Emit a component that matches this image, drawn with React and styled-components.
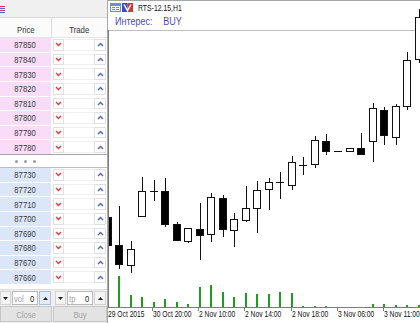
import React from "react";
import styled, { createGlobalStyle } from "styled-components";

const FONT = `"Liberation Sans", Arial, sans-serif`;
const SQ = 0.82;

const GlobalStyle = createGlobalStyle`
  html, body { margin: 0; padding: 0; background: #fff; }
  body { font-family: ${FONT}; overflow: hidden; }
`;

const Squeeze = styled.span`
  display: inline-block;
  white-space: pre;
  transform: scaleX(${SQ});
  transform-origin: ${(p) => p.$origin || "center"};
`;

const Root = styled.div`
  display: flex;
  width: 420px;
  height: 323px;
  overflow: hidden;
  background: #fff;
`;

const Panel = styled.div`
  width: 108px;
  flex: none;
  display: flex;
  flex-direction: column;
  box-sizing: border-box;
  border-right: 1px solid #a9a9a9;
  background: #fff;
`;

const Toolbar = styled.div`
  height: 18px;
  flex: none;
  box-sizing: border-box;
  background: #f0f0f0;
  border-bottom: 1px solid #d9d9d9;
  display: flex;
  align-items: center;
`;

const HeaderRow = styled.div`
  height: 20px;
  flex: none;
  box-sizing: border-box;
  display: grid;
  grid-template-columns: 51px 1fr;
  background: #fbfbfb;
  border-bottom: 1px solid #e4e4e4;
`;

const HeaderCell = styled.div`
  display: flex;
  align-items: center;
  justify-content: center;
  padding-top: 3px;
  font-size: 9.5px;
  color: #333;
  & + & { border-left: 1px solid #dcdcdc; }
`;

const Ladder = styled.div`
  height: 116px;
  flex: none;
  display: grid;
  grid-template-rows: repeat(8, 1fr);
  row-gap: 1px;
  background: #fff;
`;

const Row = styled.div`
  display: grid;
  grid-template-columns: 51px 1fr;
  column-gap: 1px;
  min-height: 0;
`;

const PriceCell = styled.div`
  background: ${(p) => (p.$side === "sell" ? "#f9dcf7" : "#dbe6f9")};
  display: flex;
  align-items: center;
  justify-content: center;
  font-size: 9.4px;
  color: #383838;
`;

const TradeCell = styled.div`
  display: flex;
  padding: 1px;
  background: #fff;
  min-height: 0;
`;

const StepBtn = styled.div`
  width: ${(p) => p.$w}px;
  flex: none;
  box-sizing: border-box;
  border: 1px solid #e0e0e0;
  background: #fff;
  display: flex;
  align-items: center;
  justify-content: center;
`;

const QtyBox = styled.div`
  flex: 1;
  box-sizing: border-box;
  border-top: 1px solid #f0f0f0;
  border-bottom: 1px solid #f0f0f0;
  background: #fff;
`;

const Divider = styled.div`
  height: 14px;
  flex: none;
  box-sizing: border-box;
  border-top: 1px solid #a4a4a4;
  border-bottom: 1px solid #bdbdbd;
  display: grid;
  grid-template-columns: 51px 1fr;
  background: #fff;
`;

const Dots = styled.div`
  display: flex;
  align-items: center;
  justify-content: center;
  gap: 6px;
`;

const Dot = styled.span`
  width: 3px;
  height: 3px;
  border-radius: 50%;
  background: #9c9c9c;
`;

const Spacer = styled.div`
  flex: 1;
  background: #fff;
`;

const Controls = styled.div`
  height: 17px;
  flex: none;
  box-sizing: border-box;
  background: #f0f0f0;
  border-top: 1px solid #dedede;
  display: flex;
  align-items: center;
  padding: 0 1px 0 0;
`;

const Spin = styled.div`
  display: flex;
  align-items: stretch;
  height: 14px;
  margin-left: ${(p) => p.$ml || 0}px;
`;

const SpinBtn = styled.div`
  width: ${(p) => p.$w}px;
  box-sizing: border-box;
  border: 1px solid ${(p) => (p.$active ? "#a9bfdc" : "#d2d2d2")};
  background: ${(p) => (p.$active ? "#e3ecf8" : "#f4f4f4")};
  display: flex;
  align-items: center;
  justify-content: center;
`;

const SpinField = styled.div`
  width: ${(p) => p.$w}px;
  box-sizing: border-box;
  border: 1px solid #b9b9b9;
  background: #fff;
  margin: 0 1px;
  display: flex;
  align-items: center;
  justify-content: space-between;
  padding: 0 3px 0 1px;
  font-size: 9.4px;
  overflow: hidden;
`;

const FieldLabel = styled(Squeeze)`
  color: #a0a0a0;
`;

const FieldValue = styled(Squeeze)`
  color: #222;
`;

const Actions = styled.div`
  height: 17px;
  flex: none;
  display: grid;
  grid-template-columns: 52px 1fr;
  column-gap: 1px;
  padding-bottom: 1px;
  box-sizing: border-box;
  background: #f0f0f0;
`;

const ActionBtn = styled.div`
  box-sizing: border-box;
  border: 1px solid #c7c7c7;
  background: #e3e3e3;
  color: #a3a3a3;
  font-size: 9.4px;
  display: flex;
  align-items: center;
  justify-content: center;
`;

const Chart = styled.div`
  flex: 1;
  position: relative;
  background: #fff;
  overflow: hidden;
`;

const Canvas = styled.svg`
  display: block;
`;

const Legend = styled.div`
  position: absolute;
  left: 2px;
  top: 2px;
  display: flex;
  flex-direction: column;
`;

const TitleRow = styled.div`
  display: flex;
  align-items: center;
  height: 11px;
  gap: 1px;
`;

const Title = styled(Squeeze)`
  margin-left: 4px;
  font-size: 8.4px;
  color: #111;
`;

const Interest = styled.div`
  margin-top: 2px;
  padding-left: 5px;
  font-size: 11px;
  line-height: 13px;
  color: #4b4bc6;
`;

const InterestValue = styled.span`
  margin-left: 13px;
`;

const Down = ({ color = "#e23a3a" }) => (
  <svg width="7" height="5" viewBox="0 0 7 5">
    <polyline points="1,1 3.5,3.5 6,1" fill="none" stroke={color} strokeWidth="1.4" />
  </svg>
);

const Up = ({ color = "#4a64c8" }) => (
  <svg width="7" height="5" viewBox="0 0 7 5">
    <polyline points="1,4 3.5,1.5 6,4" fill="none" stroke={color} strokeWidth="1.4" />
  </svg>
);

const TriDown = () => (
  <svg width="5" height="3" viewBox="0 0 5 3">
    <polygon points="0,0 5,0 2.5,3" fill="#222" />
  </svg>
);

const TriUp = () => (
  <svg width="5" height="3" viewBox="0 0 5 3">
    <polygon points="0,3 5,3 2.5,0" fill="#222" />
  </svg>
);

const ListIcon = () => (
  <svg width="5" height="8" viewBox="0 0 5 8" style={{ marginTop: 3 }}>
    <rect x="0" y="0" width="5" height="1" fill="#d84040" />
    <rect x="0" y="2" width="5" height="1" fill="#4a6ad0" />
    <rect x="0" y="4" width="5" height="1" fill="#d84040" />
    <rect x="0" y="6" width="5" height="1" fill="#4a6ad0" />
  </svg>
);

const WindowIcon = () => (
  <svg width="11" height="9" viewBox="0 0 11 9">
    <rect x="0.5" y="0.5" width="10" height="8" fill="#eef2fa" stroke="#7d8db0" />
    <rect x="1" y="1" width="9" height="2" fill="#6f8ed6" />
    <rect x="2" y="4" width="3" height="1" fill="#d46a6a" />
    <rect x="6" y="4" width="3" height="1" fill="#6f8ed6" />
    <rect x="2" y="6" width="3" height="1" fill="#6f8ed6" />
    <rect x="6" y="6" width="3" height="1" fill="#d46a6a" />
  </svg>
);

const FlagIcon = () => (
  <svg width="11" height="9" viewBox="0 0 11 9">
    <rect x="0" y="0" width="5.5" height="9" fill="#3553c4" />
    <rect x="5.5" y="0" width="5.5" height="9" fill="#d83434" />
    <polyline points="2,1.5 5.5,7.5 9,1.5" fill="none" stroke="#fff" strokeWidth="1.4" />
  </svg>
);

const sell = [87850, 87840, 87830, 87820, 87810, 87800, 87790, 87780];
const buy = [87730, 87720, 87710, 87700, 87690, 87680, 87670, 87660];

// [bodyTop, bodyBottom, high, low, dark]
const candles = [
  [217, 245, 214, 248, true],
  [245, 264, 206, 269, true],
  [249, 265, 241, 273, false],
  [191, 216, 177, 217, false],
  [191, 191, 180, 201, false],
  [191, 224, 178, 227, true],
  [224, 240, 222, 241, true],
  [228, 241, 228, 243, false],
  [229, 235, 203, 260, true],
  [197, 234, 193, 242, false],
  [198, 229, 195, 237, true],
  [219, 230, 213, 247, false],
  [208, 220, 186, 222, false],
  [190, 208, 181, 233, false],
  [182, 189, 178, 210, false],
  [182, 182, 172, 199, false],
  [162, 185, 156, 190, false],
  [165, 165, 157, 175, false],
  [140, 164, 136, 168, false],
  [141, 151, 134, 155, true],
  [151, 151, 151, 151, false],
  [148, 151, 148, 151, false],
  [148, 154, 133, 154, true],
  [108, 141, 103, 162, false],
  [110, 135, 107, 145, true],
  [106, 137, 104, 145, false],
  [60, 106, 52, 110, false],
  [17, 59, 9, 63, false],
];

const volumes = [
  null, 276, 295, 297, 302, 299, 302, 304, 287, 285, 292, 297, 293, 294,
  294, 292, 293, 306, 306, 306, null, null, null, 304, 304, 305, 305, 305,
];

const labels = [
  [108, "29 Oct 2015"],
  [153, "30 Oct 20:00"],
  [199, "2 Nov 10:00"],
  [245, "2 Nov 14:00"],
  [292, "2 Nov 18:00"],
  [338, "3 Nov 06:00"],
  [384, "3 Nov 11:00"],
];

const cxOf = (i) => Math.round(107.6 + 11.52 * i);
const AXIS = 307;

function LadderRow({ price, side }) {
  return (
    <Row>
      <PriceCell $side={side}>
        <Squeeze>{price}</Squeeze>
      </PriceCell>
      <TradeCell>
        <StepBtn $w={11}>
          <Down />
        </StepBtn>
        <QtyBox />
        <StepBtn $w={12}>
          <Up />
        </StepBtn>
      </TradeCell>
    </Row>
  );
}

function CandleChart() {
  return (
    <Canvas width="312" height="323" viewBox="108 0 312 323">
      <line x1="108" y1="0.5" x2="420" y2="0.5" stroke="#a6a6a6" />
      <line x1="108" y1="30.5" x2="420" y2="30.5" stroke="#bdbdbd" />
      {volumes.map((v, i) =>
        v == null ? null : (
          <rect key={"v" + i} x={cxOf(i) - 1} y={v} width="2" height={AXIS - v} fill="#1e9e1e" />
        )
      )}
      {candles.map(([t, b, h, l, dark], i) => {
        const cx = cxOf(i);
        return (
          <g key={"c" + i}>
            {h !== l && <line x1={cx + 0.5} y1={h} x2={cx + 0.5} y2={l} stroke="#111" />}
            {t === b ? (
              <line x1={cx - 4} y1={t + 0.5} x2={cx + 4} y2={t + 0.5} stroke="#111" />
            ) : (
              <rect
                x={cx - 3.5}
                y={t + 0.5}
                width="7"
                height={b - t}
                fill={dark ? "#000" : "#fff"}
                stroke="#111"
              />
            )}
          </g>
        );
      })}
      <line x1="108.5" y1="30" x2="108.5" y2={AXIS + 1} stroke="#7c7c7c" />
      <line x1="108" y1={AXIS + 0.5} x2="420" y2={AXIS + 0.5} stroke="#7c7c7c" />
      {labels.map(([x, txt]) => (
        <g key={txt}>
          <line x1={x - 0.5} y1={AXIS} x2={x - 0.5} y2={AXIS + 4} stroke="#7c7c7c" />
          <text
            transform={`translate(${x} 317) scale(${SQ} 1)`}
            fontSize="8.2"
            fill="#111"
            fontFamily={FONT}
          >
            {txt}
          </text>
        </g>
      ))}
    </Canvas>
  );
}

export default function App() {
  return (
    <Root>
      <GlobalStyle />
      <Panel>
        <Toolbar>
          <ListIcon />
        </Toolbar>
        <HeaderRow>
          <HeaderCell>
            <Squeeze>Price</Squeeze>
          </HeaderCell>
          <HeaderCell>
            <Squeeze>Trade</Squeeze>
          </HeaderCell>
        </HeaderRow>
        <Ladder>
          {sell.map((p) => (
            <LadderRow key={p} price={p} side="sell" />
          ))}
        </Ladder>
        <Divider>
          <Dots>
            <Dot />
            <Dot />
            <Dot />
          </Dots>
        </Divider>
        <Ladder>
          {buy.map((p) => (
            <LadderRow key={p} price={p} side="buy" />
          ))}
        </Ladder>
        <Spacer />
        <Controls>
          <Spin>
            <SpinBtn $w={11}>
              <TriDown />
            </SpinBtn>
            <SpinField $w={26}>
              <FieldLabel $origin="left">vol</FieldLabel>
              <FieldValue $origin="right">0</FieldValue>
            </SpinField>
            <SpinBtn $w={12} $active>
              <TriUp />
            </SpinBtn>
          </Spin>
          <Spin $ml={4}>
            <SpinBtn $w={11}>
              <TriDown />
            </SpinBtn>
            <SpinField $w={26}>
              <FieldLabel $origin="left">tp</FieldLabel>
              <FieldValue $origin="right">0</FieldValue>
            </SpinField>
            <SpinBtn $w={12}>
              <TriUp />
            </SpinBtn>
          </Spin>
        </Controls>
        <Actions>
          <ActionBtn>
            <Squeeze>Close</Squeeze>
          </ActionBtn>
          <ActionBtn>
            <Squeeze>Buy</Squeeze>
          </ActionBtn>
        </Actions>
      </Panel>
      <Chart>
        <CandleChart />
        <Legend>
          <TitleRow>
            <WindowIcon />
            <FlagIcon />
            <Title $origin="left">RTS-12.15,H1</Title>
          </TitleRow>
          <Interest>
            <Squeeze $origin="left">
              Интерес:<InterestValue>BUY</InterestValue>
            </Squeeze>
          </Interest>
        </Legend>
      </Chart>
    </Root>
  );
}
